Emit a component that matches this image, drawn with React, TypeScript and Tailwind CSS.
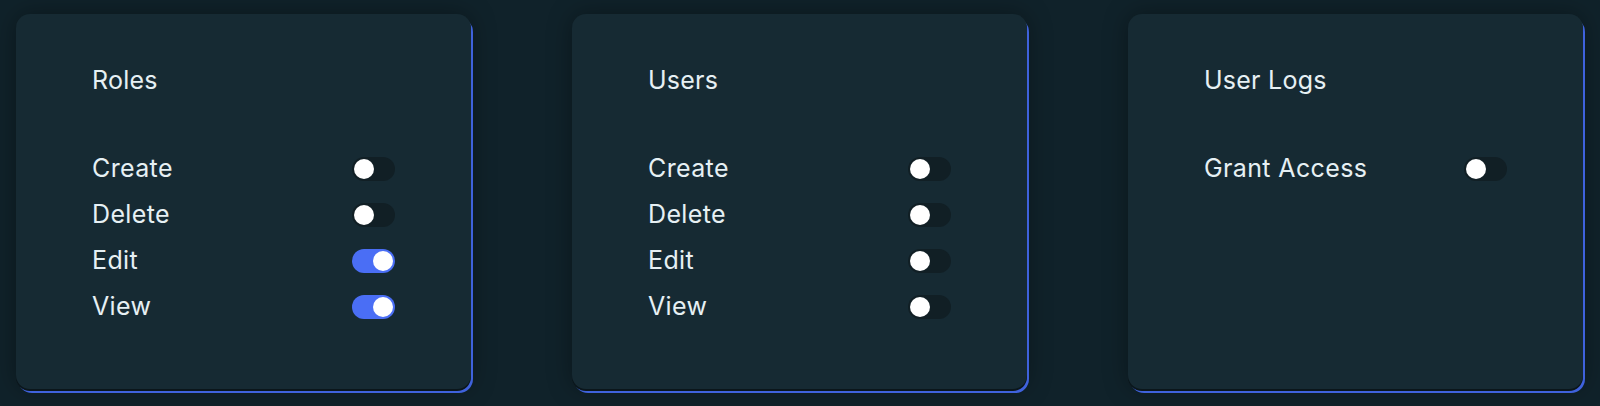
import { useState } from "react";

type Perm = { label: string; on: boolean };

const groups: { title: string; perms: Perm[] }[] = [
  {
    title: "Roles",
    perms: [
      { label: "Create", on: false },
      { label: "Delete", on: false },
      { label: "Edit", on: true },
      { label: "View", on: true },
    ],
  },
  {
    title: "Users",
    perms: [
      { label: "Create", on: false },
      { label: "Delete", on: false },
      { label: "Edit", on: false },
      { label: "View", on: false },
    ],
  },
  {
    title: "User Logs",
    perms: [{ label: "Grant Access", on: false }],
  },
];

function Toggle({ initial }: { initial: boolean }) {
  const [on, setOn] = useState(initial);
  return (
    <button
      onClick={() => setOn(!on)}
      className={`w-[43px] h-[24px] rounded-full flex items-center px-[2px] ${
        on ? "bg-[#4a6ef5] justify-end" : "bg-[#111f25] justify-start"
      }`}
    >
      <span className="w-[20px] h-[20px] rounded-full bg-white block" />
    </button>
  );
}

function PermissionCard({ title, perms }: { title: string; perms: Perm[] }) {
  return (
    <div className="w-[455px] h-[375px] bg-[#162a33] rounded-[14px] pt-[50px] px-[76px] shadow-[0_2px_0_#0b161b,2px_4px_0_#3f62dc,0_0_24px_rgba(0,0,0,0.35)]">
      <h2 className="h-8 leading-8 text-[25px] tracking-[0.01em] text-[#e6f0f4]">{title}</h2>
      <div className="mt-[50px] flex flex-col">
        {perms.map((p) => (
          <div key={p.label} className="h-[46px] flex items-center justify-between">
            <span className="text-[25px] tracking-[0.015em] text-[#e6f0f4]">{p.label}</span>
            <Toggle initial={p.on} />
          </div>
        ))}
      </div>
    </div>
  );
}

export default function App() {
  return (
    <div
      className="w-[1600px] h-[406px] bg-[#10222a] flex gap-[101px] pl-4 pt-[14px]"
      style={{ fontFamily: "Inter, 'Noto Sans', sans-serif" }}
    >
      {groups.map((g) => (
        <PermissionCard key={g.title} title={g.title} perms={g.perms} />
      ))}
    </div>
  );
}
